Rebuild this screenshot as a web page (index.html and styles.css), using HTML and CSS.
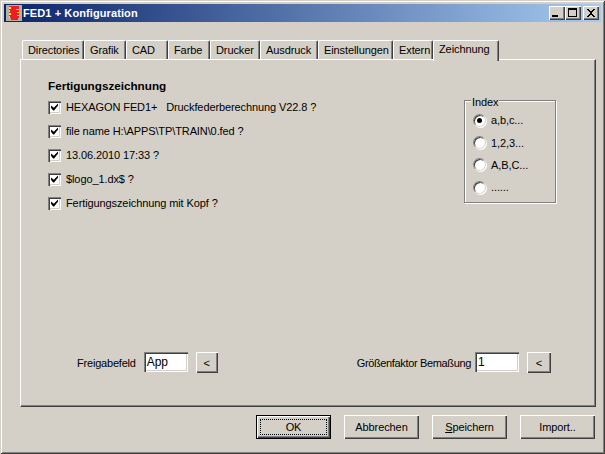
FILE: index.html
```
<!DOCTYPE html>
<html lang="de">
<head>
<meta charset="utf-8">
<title>FED1 + Konfiguration</title>
<link rel="stylesheet" href="styles.css">
</head>
<body>
<div class="window">
  <div class="titlebar">
    <svg class="app-icon" viewBox="0 0 16 16" shape-rendering="crispEdges">
      <rect width="16" height="16" fill="#b4b0a4"/>
      <path d="M3 1h10v1h-10zM5 2h8v2h-8zM3 4h7v1h-7zM4 5h9v2h-9zM3 7h8v1h-8zM5 8h8v2h-8zM3 10h8v1h-8zM4 11h9v2h-9zM5 13h7v2h-7z" fill="#ee1c25"/>
      <path d="M3 2h2v2h-2zM10 4h3v1h-3zM3 5h1v2h-1zM11 7h2v1h-2zM3 8h2v2h-2zM11 10h2v1h-2zM3 11h1v2h-1z" fill="#ffe800"/>
    </svg>
    <span class="title-text">FED1 + Konfiguration</span>
    <div class="caption-buttons">
      <button class="caption-btn"><svg viewBox="0 0 12 10" shape-rendering="crispEdges"><rect x="1" y="7" width="6" height="2" fill="#000"/></svg></button>
      <button class="caption-btn caption-gap"><svg viewBox="0 0 12 10" shape-rendering="crispEdges"><path d="M1 0h9v9h-9zM2 2v6h7v-6z" fill="#000" fill-rule="evenodd"/></svg></button>
      <button class="caption-btn"><svg viewBox="0 0 12 10" shape-rendering="crispEdges"><path d="M2 1h2v1h1v1h2v-1h1v-1h2v1h-1v1h-1v1h-1v2h1v1h1v1h1v1h-2v-1h-1v-1h-2v1h-1v1h-2v-1h1v-1h1v-1h1v-2h-1v-1h-1v-1h-1z" fill="#000"/></svg></button>
    </div>
  </div>
  <div class="client">
    <div class="tabs">
      <div class="tab t-dir">Directories</div>
      <div class="tab t-graf">Grafik</div>
      <div class="tab t-cad">CAD</div>
      <div class="tab t-farbe">Farbe</div>
      <div class="tab t-druck">Drucker</div>
      <div class="tab t-aus">Ausdruck</div>
      <div class="tab t-ein">Einstellungen</div>
      <div class="tab t-ext">Extern</div>
      <div class="tab tab-active">Zeichnung</div>
    </div>
    <div class="pane">
      <div class="pane-top">
        <div class="options">
          <h2 class="heading">Fertigungszeichnung</h2>
          <label class="check"><span class="box"></span><span>HEXAGON FED1+ &nbsp; Druckfederberechnung V22.8 ?</span></label>
          <label class="check"><span class="box"></span><span>file name H:\APPS\TP\TRAIN\0.fed ?</span></label>
          <label class="check"><span class="box"></span><span>13.06.2010 17:33 ?</span></label>
          <label class="check"><span class="box"></span><span>$logo_1.dx$ ?</span></label>
          <label class="check"><span class="box"></span><span>Fertigungszeichnung mit Kopf ?</span></label>
        </div>
        <div class="group">
          <span class="legend">Index</span>
          <div class="radio"><span class="dot dot-on"></span><span>a,b,c...</span></div>
          <div class="radio"><span class="dot"></span><span>1,2,3...</span></div>
          <div class="radio"><span class="dot"></span><span>A,B,C...</span></div>
          <div class="radio"><span class="dot"></span><span>......</span></div>
        </div>
      </div>
      <div class="pane-bottom">
        <div class="field">
          <span class="field-label">Freigabefeld</span>
          <span class="input">App</span>
          <button class="mini">&lt;</button>
        </div>
        <div class="field field-right">
          <span class="field-label">Größenfaktor Bemaßung</span>
          <span class="input">1</span>
          <button class="mini">&lt;</button>
        </div>
      </div>
    </div>
    <div class="footer">
      <button class="btn btn-default"><span class="focus">OK</span></button>
      <button class="btn">Abbrechen</button>
      <button class="btn"><span><u>S</u>peichern</span></button>
      <button class="btn">Import..</button>
    </div>
  </div>
</div>
</body>
</html>
```
FILE: styles.css
```
* { box-sizing: border-box; }
html, body { margin: 0; padding: 0; }
body {
  width: 605px;
  height: 454px;
  overflow: hidden;
  background: #d4d0c8;
  font: 11px "Liberation Sans", Arial, sans-serif;
  letter-spacing: -0.1px;
  color: #000;
}
button { font: inherit; letter-spacing: inherit; color: inherit; padding: 0; }

.window {
  width: 605px;
  height: 454px;
  padding: 4px;
  display: flex;
  flex-direction: column;
  background: #d4d0c8;
  box-shadow: inset 1px 1px 0 #d4d0c8, inset -1px -1px 0 #404040, inset 2px 2px 0 #fff, inset -2px -2px 0 #808080;
}

.titlebar {
  height: 18px;
  flex: none;
  display: flex;
  align-items: center;
  padding: 0 2px 0 2px;
  background: linear-gradient(90deg, #0a246a, #a6caf0);
  color: #fff;
}
.app-icon { width: 16px; height: 16px; flex: none; margin-right: 1px; }
.title-text { font-weight: bold; font-size: 11px; letter-spacing: 0.1px; white-space: pre; }
.caption-buttons { margin-left: auto; display: flex; }
.caption-btn {
  width: 16px;
  height: 14px;
  display: flex;
  align-items: center;
  justify-content: center;
  background: #d4d0c8;
  border: 0;
  box-shadow: inset 1px 1px 0 #fff, inset -1px -1px 0 #404040, inset -2px -2px 0 #808080;
}
.caption-btn svg { width: 12px; height: 10px; display: block; }
.caption-gap { margin: 0 2px 0 0; }

.client {
  flex: 1;
  min-height: 0;
  display: flex;
  flex-direction: column;
  padding: 16px 5px 0 16px;
}

.tabs {
  height: 23px;
  flex: none;
  display: flex;
  align-items: flex-end;
  padding-left: 2px;
  position: relative;
  z-index: 1;
  margin-bottom: -2px;
}
.tab {
  height: 19px;
  margin-bottom: 2px;
  padding: 3px 0 0 5px;
  white-space: nowrap;
  background: #d4d0c8;
  border-top: 1px solid #fff;
  border-left: 1px solid #fff;
  border-right: 1px solid #404040;
  box-shadow: inset -1px 0 0 #808080;
  border-radius: 2px 2px 0 0;
}
.t-dir { width: 62px; }
.t-graf { width: 42px; }
.t-cad { width: 42px; }
.t-farbe { width: 42px; }
.t-druck { width: 50px; }
.t-aus { width: 58px; }
.t-ein { width: 75px; }
.t-ext { width: 40px; }
.tab-active {
  width: 66px;
  height: 21px;
  margin-bottom: 0;
  padding: 2px 0 0 5px;
}

.pane {
  flex: none;
  display: flex;
  flex-direction: column;
  height: 348px;
  padding: 19px 0 0 27px;
  border-top: 1px solid #fff;
  border-left: 1px solid #fff;
  border-right: 1px solid #404040;
  border-bottom: 1px solid #404040;
  box-shadow: inset -1px -1px 0 #808080;
}
.pane-top { display: flex; justify-content: space-between; }
.heading { margin: 0 0 2px; font-size: 11.7px; letter-spacing: 0; line-height: 14px; font-weight: bold; }
.check {
  display: flex;
  align-items: center;
  gap: 5px;
  height: 24px;
  white-space: pre;
}
.box {
  width: 13px;
  height: 13px;
  flex: none;
  position: relative;
  background: #fff;
  box-shadow: inset 1px 1px 0 #808080, inset 2px 2px 0 #404040, inset -1px -1px 0 #fff, inset -2px -2px 0 #d4d0c8;
}
.box::after {
  content: "";
  position: absolute;
  left: 3px;
  top: 3px;
  width: 7px;
  height: 7px;
  background: #000;
  clip-path: polygon(0 30%, 0 60%, 30% 100%, 45% 100%, 100% 30%, 100% 0, 40% 60%);
}

.group {
  position: relative;
  width: 92px;
  height: 103px;
  margin: 21px 39px 0 0;
  padding-top: 8px;
  border: 1px solid #808080;
  box-shadow: 1px 1px 0 #fff, inset 1px 1px 0 #fff;
}
.legend {
  position: absolute;
  left: 6px;
  top: -6px;
  padding: 0 1px;
  line-height: 14px;
  background: #d4d0c8;
}
.radio {
  display: flex;
  align-items: center;
  gap: 5px;
  height: 22.4px;
  padding-left: 8px;
}
.dot {
  width: 13px;
  height: 13px;
  flex: none;
  border-radius: 50%;
  background: #fff;
  border: 1px solid;
  border-color: #808080 #d4d0c8 #d4d0c8 #808080;
  box-shadow: inset 1px 1px 0 #404040, 1px 1px 0 #fff;
  position: relative;
}
.dot-on::after {
  content: "";
  position: absolute;
  left: 3px;
  top: 3px;
  width: 5px;
  height: 5px;
  border-radius: 50%;
  background: #000;
}

.pane-bottom {
  margin-top: auto;
  margin-bottom: 33px;
  margin-right: 44px;
  padding-left: 29px;
  display: flex;
  justify-content: space-between;
}
.field { display: flex; align-items: flex-start; }
.field-label { align-self: center; letter-spacing: -0.2px; }
.field-right .field-label { letter-spacing: -0.35px; }
.input {
  width: 44px;
  height: 20px;
  margin-left: 8px;
  padding: 3px 0 0 3px;
  font-size: 12px;
  background: #fff;
  box-shadow: inset 1px 1px 0 #808080, inset 2px 2px 0 #404040, inset -1px -1px 0 #fff, inset -2px -2px 0 #d4d0c8;
}
.mini {
  width: 22px;
  height: 21px;
  margin-left: 8px;
  background: #d4d0c8;
  border: 0;
  box-shadow: inset 1px 1px 0 #fff, inset -1px -1px 0 #404040, inset -2px -2px 0 #808080;
}
.field-right .input { margin-left: 4px; }
.field-right .mini { width: 24px; }

.footer {
  flex: none;
  display: flex;
  gap: 13px;
  padding: 8px 0 0 236px;
}
.btn {
  width: 75px;
  height: 24px;
  background: #d4d0c8;
  border: 0;
  display: flex;
  align-items: center;
  justify-content: center;
  box-shadow: inset 1px 1px 0 #fff, inset -1px -1px 0 #404040, inset -2px -2px 0 #808080;
}
.btn-default {
  padding: 4px;
  border: 1px solid #000;
}
.focus {
  width: 100%;
  height: 100%;
  display: flex;
  align-items: center;
  justify-content: center;
  outline: 1px dotted #000;
}
```
